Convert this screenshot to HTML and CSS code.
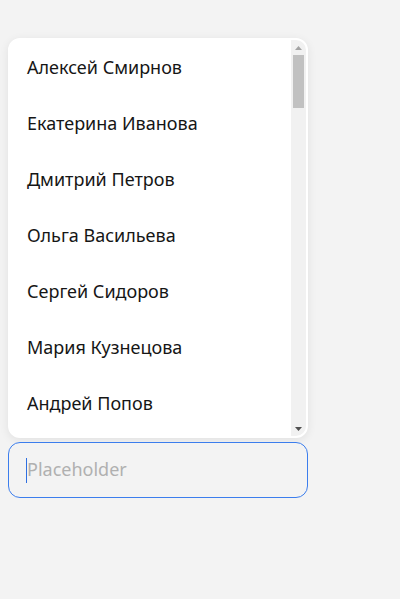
FILE: index.html
```html
<!DOCTYPE html>
<html lang="ru">
<head>
<meta charset="utf-8">
<title>Список</title>
<link rel="stylesheet" href="styles.css">
</head>
<body>
<div class="combo">
  <div class="list">
    <ul class="items">
      <li class="item">Алексей Смирнов</li>
      <li class="item">Екатерина Иванова</li>
      <li class="item">Дмитрий Петров</li>
      <li class="item">Ольга Васильева</li>
      <li class="item">Сергей Сидоров</li>
      <li class="item">Мария Кузнецова</li>
      <li class="item">Андрей Попов</li>
    </ul>
    <div class="scrollbar" aria-hidden="true">
      <div class="arrow">
        <svg width="7" height="4" viewBox="0 0 7 4"><polygon points="0,4 7,4 3.5,0" fill="#a3a3a3"/></svg>
      </div>
      <div class="track"><div class="thumb"></div></div>
      <div class="arrow">
        <svg width="7" height="4" viewBox="0 0 7 4"><polygon points="0,0 7,0 3.5,4" fill="#505050"/></svg>
      </div>
    </div>
  </div>
  <div class="field-wrap">
    <input class="field" type="text" placeholder="Placeholder">
    <span class="caret"></span>
  </div>
</div>
</body>
</html>
```
FILE: styles.css
```css
html, body {
  margin: 0;
  padding: 0;
  background: #f3f3f3;
}
body {
  padding: 38px 8px 8px 8px;
  font-family: "Noto Sans", "DejaVu Sans", sans-serif;
}
.combo {
  width: 300px;
  display: flex;
  flex-direction: column;
  gap: 4px;
}
.list {
  display: flex;
  height: 396px;
  background: #ffffff;
  border: 2px solid #ffffff;
  border-radius: 12px;
  box-shadow: 0 2px 10px rgba(0, 0, 0, 0.08);
  overflow: hidden;
}
.items {
  flex: 1;
  list-style: none;
  margin: 0;
  padding: 0;
  overflow: hidden;
}
.item {
  height: 56px;
  display: flex;
  align-items: center;
  padding: 0 16px 3px 17px;
  box-sizing: border-box;
  font-size: 18px;
  color: #161616;
  white-space: nowrap;
}
.scrollbar {
  width: 15px;
  flex: none;
  background: #f1f1f1;
  display: flex;
  flex-direction: column;
}
.arrow {
  height: 15px;
  flex: none;
  display: flex;
  align-items: center;
  justify-content: center;
}
.arrow svg {
  display: block;
}
.track {
  flex: 1;
  padding: 0 2px;
}
.thumb {
  height: 53px;
  background: #c1c1c1;
}
.field-wrap {
  position: relative;
}
.field {
  display: block;
  box-sizing: border-box;
  width: 300px;
  height: 56px;
  margin: 0;
  padding: 0 0 3px 18px;
  border: 1px solid #3b7ded;
  border-radius: 12px;
  background: #f3f3f3;
  font-family: "Noto Sans", "DejaVu Sans", sans-serif;
  font-size: 18px;
  color: #161616;
  outline: none;
}
.field::placeholder {
  color: #b0b0b0;
}
.caret {
  position: absolute;
  left: 18px;
  top: 16px;
  width: 1px;
  height: 25px;
  background: #2f6fe0;
}
```
